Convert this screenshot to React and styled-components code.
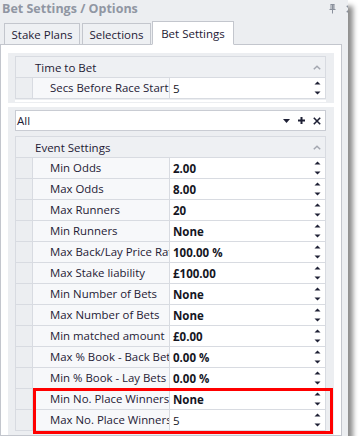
import React from "react";
import styled, { createGlobalStyle } from "styled-components";

const GlobalStyle = createGlobalStyle`
  html, body {
    margin: 0;
    padding: 0;
    background: #ffffff;
  }
  body {
    font-family: "Open Sans", "Noto Sans", "Liberation Sans", sans-serif;
    color: #1e2035;
  }
`;

const WindowFrame = styled.div`
  width: 348px;
  height: 436px;
  background: #eceef1;
  display: flex;
  flex-direction: column;
  box-shadow: 5px 6px 5px rgba(0, 0, 0, 0.45);
  overflow: hidden;
`;

const TitleBar = styled.div`
  height: 18px;
  display: flex;
  align-items: center;
  justify-content: space-between;
  padding: 0 0 0 2px;
`;

const TitleText = styled.div`
  font-size: 12.5px;
  font-weight: 700;
  color: #9096a3;
  line-height: 18px;
  white-space: nowrap;
`;

const TitleButtons = styled.div`
  display: flex;
  align-items: center;
  gap: 10px;
  margin-right: -6px;
  color: #8a909c;
`;

const TabStrip = styled.div`
  height: 26px;
  display: flex;
  align-items: flex-end;
  gap: 2px;
  padding-left: 4px;
  position: relative;
  z-index: 1;
`;

const Tab = styled.div`
  height: ${(p) => (p.$active ? "24px" : "21px")};
  width: ${(p) => p.$width}px;
  box-sizing: border-box;
  border: 1px solid #c3c6cd;
  border-bottom: ${(p) => (p.$active ? "1px solid #ffffff" : "none")};
  margin-bottom: ${(p) => (p.$active ? "-1px" : "0")};
  background: ${(p) => (p.$active ? "#ffffff" : "#eef0f3")};
  font-size: 11.5px;
  color: #1e2035;
  display: flex;
  align-items: center;
  justify-content: center;
  white-space: nowrap;
  margin-left: ${(p) => (p.$active ? "-1px" : "0")};
`;

const Panel = styled.div`
  flex: 1;
  margin-right: 6px;
  background: #ffffff;
  border: 1px solid #c3c6cd;
  padding: 8px 7px 0 7px;
  display: flex;
  flex-direction: column;
  gap: 4px;
  min-height: 0;
`;

const Group = styled.div`
  background: #eceef1;
  padding: 3px 8px ${(p) => (p.$fill ? "4px" : "1px")} 7px;
  display: flex;
  flex-direction: column;
  flex: ${(p) => (p.$fill ? 1 : "none")};
`;

const Splitter = styled.div`
  height: 2px;
  background: #ffffff;
  margin-top: 1px;
`;

const FilterBox = styled.div`
  height: 21px;
  box-sizing: border-box;
  background: #ffffff;
  border: 1px solid #c9ccd3;
  display: flex;
  align-items: center;
  padding: 0 4px 0 1px;
  font-size: 11.5px;
  color: #1e2035;
  margin-bottom: 5px;
`;

const FilterText = styled.span`
  flex: 1;
`;

const FilterIcons = styled.div`
  display: flex;
  align-items: center;
  gap: 8px;
  color: #1e2035;
`;

const List = styled.div`
  border: 1px solid #d8dbe1;
  border-bottom: none;
  display: flex;
  flex-direction: column;
`;

const HeaderRow = styled.div`
  height: 20px;
  border-bottom: 1px solid #d8dbe1;
  background: #eef0f3;
  display: flex;
  align-items: center;
  padding: 0 4px 0 19px;
  font-size: 11.5px;
  color: #1e2035;
`;

const HeaderText = styled.span`
  flex: 1;
`;

const Row = styled.div`
  height: 20px;
  display: flex;
  border-bottom: 1px solid #d8dbe1;
`;

const Indent = styled.div`
  width: 16px;
  flex: none;
  background: #eceef1;
`;

const LabelCell = styled.div`
  width: 138px;
  flex: none;
  border-left: 1px solid #d8dbe1;
  border-right: 1px solid #d8dbe1;
  background: #f7f8fa;
  padding-left: 17px;
  box-sizing: border-box;
  font-size: 11.4px;
  line-height: 20px;
  white-space: nowrap;
  overflow: hidden;
  color: #1e2035;
`;

const ValueCell = styled.div`
  flex: 1;
  background: #ffffff;
  display: flex;
  align-items: center;
  padding: 0 4px 0 3px;
  font-size: 11.5px;
  font-weight: ${(p) => (p.$bold ? 700 : 400)};
  color: #15161f;
`;

const ValueText = styled.span`
  flex: 1;
`;

const Highlight = styled.div`
  position: relative;
  display: flex;
  flex-direction: column;
  &::after {
    content: "";
    position: absolute;
    top: -1px;
    left: 17px;
    right: -8px;
    bottom: -3px;
    border: 3px solid #ff0000;
    pointer-events: none;
  }
`;

const Spin = () => (
  <svg width="7" height="14" viewBox="0 0 7 14">
    <path d="M0.5 3.5 L3.5 0.5 L6.5 3.5 Z" fill="#1e2035" />
    <path d="M0.5 10.5 L3.5 13.5 L6.5 10.5 Z" fill="#1e2035" />
  </svg>
);

const Chevron = () => (
  <svg width="8" height="5" viewBox="0 0 8 5">
    <path d="M0.8 4.3 L4 1.2 L7.2 4.3" fill="none" stroke="#a3a7b0" strokeWidth="1.5" />
  </svg>
);

const PinIcon = () => (
  <svg width="7" height="10" viewBox="0 0 7 10">
    <path d="M1.5 0.5 H5.5 M2 0.5 V5.5 M5 0.5 V5.5 M0.5 5.5 H6.5 M3.5 5.5 V9.5" fill="none" stroke="#8a909c" strokeWidth="1" />
    <rect x="3" y="1" width="1.5" height="4.5" fill="#8a909c" />
  </svg>
);

const CloseIcon = ({ color = "#8a909c", size = 8, stroke = 1.5 }) => (
  <svg width={size} height={size} viewBox="0 0 8 8">
    <path d="M0.8 0.8 L7.2 7.2 M7.2 0.8 L0.8 7.2" fill="none" stroke={color} strokeWidth={stroke} />
  </svg>
);

const DropIcon = () => (
  <svg width="7" height="4" viewBox="0 0 7 4">
    <path d="M0 0 H7 L3.5 4 Z" fill="#1e2035" />
  </svg>
);

const PlusIcon = () => (
  <svg width="7" height="7" viewBox="0 0 7 7">
    <path d="M3.5 0 V7 M0 3.5 H7" fill="none" stroke="#1e2035" strokeWidth="2" />
  </svg>
);

const eventRows = [
  { label: "Min Odds", value: "2.00", bold: true },
  { label: "Max Odds", value: "8.00", bold: true },
  { label: "Max Runners", value: "20", bold: true },
  { label: "Min Runners", value: "None", bold: true },
  { label: "Max Back/Lay Price Ratio", value: "100.00 %", bold: true },
  { label: "Max Stake liability", value: "£100.00", bold: true },
  { label: "Min Number of Bets", value: "None", bold: true },
  { label: "Max Number of Bets", value: "None", bold: true },
  { label: "Min matched amount", value: "£0.00", bold: true },
  { label: "Max % Book - Back Bets", value: "0.00 %", bold: true },
  { label: "Min % Book - Lay Bets", value: "0.00 %", bold: true },
];

const highlighted = [
  { label: "Min No. Place Winners", value: "None", bold: true },
  { label: "Max No. Place Winners", value: "5", bold: false },
];

function PropRow({ label, value, bold }) {
  return (
    <Row>
      <Indent />
      <LabelCell>{label}</LabelCell>
      <ValueCell $bold={bold}>
        <ValueText>{value}</ValueText>
        <Spin />
      </ValueCell>
    </Row>
  );
}

export default function App() {
  return (
    <>
      <GlobalStyle />
      <WindowFrame>
        <TitleBar>
          <TitleText>Bet Settings / Options</TitleText>
          <TitleButtons>
            <PinIcon />
            <CloseIcon />
          </TitleButtons>
        </TitleBar>
        <TabStrip>
          <Tab $width={76}>Stake Plans</Tab>
          <Tab $width={69}>Selections</Tab>
          <Tab $width={82} $active>
            Bet Settings
          </Tab>
        </TabStrip>
        <Panel>
          <Group>
            <List>
              <HeaderRow>
                <HeaderText>Time to Bet</HeaderText>
                <Chevron />
              </HeaderRow>
              <PropRow label="Secs Before Race Start" value="5" />
            </List>
            <Splitter />
          </Group>
          <Group $fill>
            <FilterBox>
              <FilterText>All</FilterText>
              <FilterIcons>
                <DropIcon />
                <PlusIcon />
                <CloseIcon color="#1e2035" size={8} stroke={1.6} />
              </FilterIcons>
            </FilterBox>
            <List>
              <HeaderRow>
                <HeaderText>Event Settings</HeaderText>
                <Chevron />
              </HeaderRow>
              {eventRows.map((r, i) => (
                <PropRow key={i} {...r} />
              ))}
              <Highlight>
                {highlighted.map((r, i) => (
                  <PropRow key={i} {...r} />
                ))}
              </Highlight>
            </List>
          </Group>
        </Panel>
      </WindowFrame>
    </>
  );
}
